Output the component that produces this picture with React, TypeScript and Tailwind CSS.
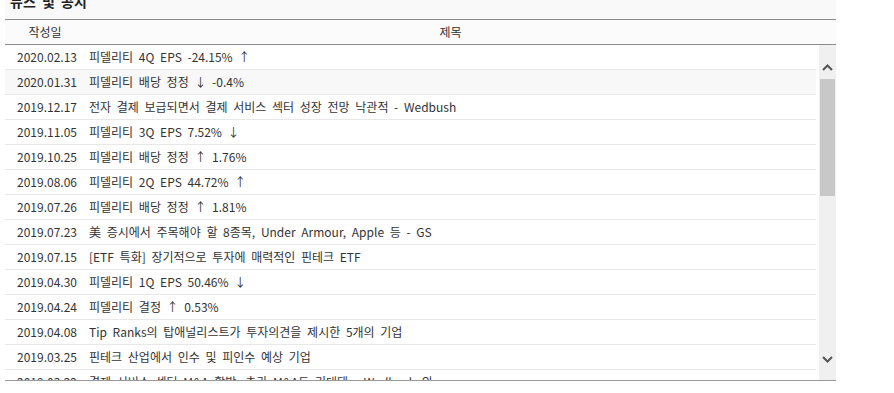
import React from 'react';

const rows = [
  { date: '2020.02.13', title: '피델리티 4Q EPS -24.15% ↑' },
  { date: '2020.01.31', title: '피델리티 배당 정정 ↓ -0.4%' },
  { date: '2019.12.17', title: '전자 결제 보급되면서 결제 서비스 섹터 성장 전망 낙관적 - Wedbush' },
  { date: '2019.11.05', title: '피델리티 3Q EPS 7.52% ↓' },
  { date: '2019.10.25', title: '피델리티 배당 정정 ↑ 1.76%' },
  { date: '2019.08.06', title: '피델리티 2Q EPS 44.72% ↑' },
  { date: '2019.07.26', title: '피델리티 배당 정정 ↑ 1.81%' },
  { date: '2019.07.23', title: '美 증시에서 주목해야 할 8종목, Under Armour, Apple 등 - GS' },
  { date: '2019.07.15', title: '[ETF 특화] 장기적으로 투자에 매력적인 핀테크 ETF' },
  { date: '2019.04.30', title: '피델리티 1Q EPS 50.46% ↓' },
  { date: '2019.04.24', title: '피델리티 결정 ↑ 0.53%' },
  { date: '2019.04.08', title: 'Tip Ranks의 탑애널리스트가 투자의견을 제시한 5개의 기업' },
  { date: '2019.03.25', title: '핀테크 산업에서 인수 및 피인수 예상 기업' },
  { date: '2019.03.22', title: '결제 서비스 섹터 M&A 활발, 추가 M&A도 기대돼 - Wedbush 외' },
];

const Chevron = ({ down = false }: { down?: boolean }) => (
  <svg width="11" height="7" viewBox="0 0 11 7" className="block">
    <polyline
      points={down ? '1,1 5.5,5.5 10,1' : '1,6 5.5,1.5 10,6'}
      fill="none"
      stroke="#555"
      strokeWidth="2"
    />
  </svg>
);

export default function App() {
  return (
    <div className="bg-white w-[894px] h-[393px] overflow-hidden text-[#333] font-['Noto_Sans_CJK_KR','Noto_Sans',sans-serif]">
      <div className="ml-[5px] w-[831px]">
        {/* Section title (cut off at top) */}
        <div className="h-[19px] bg-[#f9f9f9] overflow-hidden">
          <div className="-mt-[7px] pl-[5px] text-[14px] leading-[16px] font-bold text-[#222] [word-spacing:3px]">뉴스 및 공시</div>
        </div>

        {/* Table header */}
        <div className="flex h-[26px] bg-[#fbfbfb] border-y border-[#8c8c8c] text-[12px] leading-[24px]">
          <div className="w-[80px] text-center">작성일</div>
          <div className="flex-1 text-center pr-[20px]">제목</div>
        </div>

        {/* Body */}
        <div className="flex h-[336px] border-b border-[#9a9a9a] overflow-hidden">
          <div className="w-[811px] overflow-hidden">
            {rows.map((r, i) => (
              <div
                key={r.date + i}
                className={`flex h-[25px] shrink-0 border-b border-[#e8e8e8] text-[12px] leading-[24px] whitespace-nowrap ${
                  i === 1 ? 'bg-[#f8f8f8]' : 'bg-white'
                }`}
              >
                <div className="w-[80px] pl-[4px] text-center">{r.date}</div>
                <div className="flex-1 pl-[4px] [word-spacing:3px]">{r.title}</div>
              </div>
            ))}
          </div>

          {/* Scrollbar */}
          <div className="ml-[3px] w-[17px] bg-[#f0f0f0] flex flex-col">
            <div className="h-[34px] flex justify-center pt-[19px]">
              <Chevron />
            </div>
            <div className="mx-[1px] h-[117px] bg-[#c8c8c8]" />
            <div className="flex-1" />
            <div className="h-[34px] flex justify-center pt-[10px]">
              <Chevron down />
            </div>
          </div>
        </div>
      </div>
    </div>
  );
}
